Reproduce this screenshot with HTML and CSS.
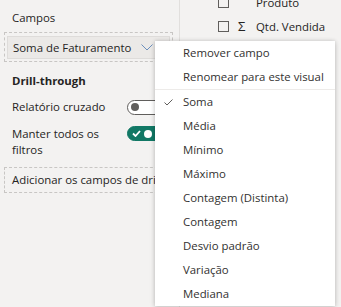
FILE: index.html
```html
<!DOCTYPE html>
<html lang="pt-BR">
<head>
    <meta charset="UTF-8">
    <meta name="viewport" content="width=device-width, initial-scale=1.0">
    <title>Campos</title>
    <link rel="stylesheet" href="styles.css">
</head>
<body>
    <div class="screen">
        <div class="panel">
            <div class="section-title">Campos</div>
            <div class="well">
                <div class="field">
                    <span>Soma de Faturamento</span>
                    <svg class="chev" width="12" height="7" viewBox="0 0 12 7"><polyline points="0.5,0.5 6,6 11.5,0.5" fill="none" stroke="#6b8fbd" stroke-width="1"/></svg>
                </div>
            </div>

            <div class="heading">Drill-through</div>

            <div class="row">
                <span class="row-label">Relatório cruzado</span>
                <span class="toggle"><span class="knob"></span></span>
            </div>
            <div class="row row-tall">
                <span class="row-label">Manter todos os<br>filtros</span>
                <span class="toggle on">
                    <svg width="9" height="7" viewBox="0 0 9 7"><polyline points="1,3.5 3.5,6 8,1" fill="none" stroke="#fff" stroke-width="1.8"/></svg>
                    <span class="knob"></span>
                </span>
            </div>

            <div class="drop">Adicionar os campos de drill-through aqui</div>
        </div>

        <div class="side">
            <div class="check-row first">
                <span class="box"></span>
                <span class="sigma"></span>
                <span>Produto</span>
            </div>
            <div class="check-row">
                <span class="box"></span>
                <span class="sigma">Σ</span>
                <span>Qtd. Vendida</span>
            </div>
        </div>

        <div class="menu">
            <div class="item">Remover campo</div>
            <div class="item">Renomear para este visual</div>
            <div class="sep"></div>
            <div class="item checked">
                <svg class="tick" width="9" height="7" viewBox="0 0 9 7"><polyline points="0.5,3.5 3,6 8.5,0.5" fill="none" stroke="#605e5c" stroke-width="1"/></svg>
                Soma
            </div>
            <div class="item">Média</div>
            <div class="item">Mínimo</div>
            <div class="item">Máximo</div>
            <div class="item">Contagem (Distinta)</div>
            <div class="item">Contagem</div>
            <div class="item">Desvio padrão</div>
            <div class="item">Variação</div>
            <div class="item">Mediana</div>
        </div>
    </div>
</body>
</html>
```

FILE: styles.css
```css
html, body {
    margin: 0;
    padding: 0;
}
body {
    font-family: "Open Sans", "Noto Sans", sans-serif;
    font-size: 11.4px;
    color: #252423;
    background-color: #f3f2f1;
}
.screen {
    position: relative;
    display: flex;
    width: 341px;
    height: 307px;
    overflow: hidden;
}
.panel {
    width: 180px;
    flex: none;
    box-sizing: border-box;
    padding: 10px 0 0 4px;
    border-right: 1px solid #e1dfdd;
}
.section-title {
    padding-left: 8px;
    line-height: 16px;
    height: 16px;
    margin-bottom: 6px;
}
.well {
    width: 169px;
    height: 30px;
    box-sizing: border-box;
    border: 1px dashed #c8c6c4;
    padding: 3px 0 0 2px;
}
.field {
    display: flex;
    align-items: center;
    width: 163px;
    height: 23px;
    box-sizing: border-box;
    padding-left: 5px;
    background-color: #ebe9e7;
    border: 1px solid #dedcda;
}
.field .chev {
    margin-left: auto;
    margin-right: 16px;
}
.heading {
    font-weight: bold;
    padding-left: 8px;
    line-height: 16px;
    margin-top: 11px;
}
.row {
    display: flex;
    align-items: center;
    padding-left: 8px;
    margin-top: 10px;
    height: 16px;
}
.row-label {
    width: 115px;
    line-height: 16px;
}
.row-tall {
    height: 32px;
    margin-top: 11px;
    align-items: flex-start;
}
.row-tall .toggle {
    margin-top: 0;
}
.toggle {
    display: flex;
    align-items: center;
    width: 38px;
    height: 15px;
    box-sizing: border-box;
    border: 1px solid #605e5c;
    border-radius: 8px;
    background-color: #fff;
    padding-left: 3px;
}
.toggle .knob {
    width: 8px;
    height: 8px;
    border-radius: 50%;
    background-color: #605e5c;
}
.toggle.on {
    background-color: #117865;
    border-color: #117865;
    padding-left: 4px;
}
.toggle.on .knob {
    background-color: #fff;
    margin-left: 3px;
}
.drop {
    width: 169px;
    height: 26px;
    box-sizing: border-box;
    border: 1px dashed #c8c6c4;
    margin-top: 9px;
    padding-left: 7px;
    line-height: 24px;
    white-space: nowrap;
    overflow: hidden;
}
.side {
    flex: 1;
    padding-left: 38px;
}
.check-row {
    display: flex;
    align-items: center;
    height: 24px;
}
.check-row.first {
    margin-top: -10px;
}
.box {
    width: 11px;
    height: 11px;
    box-sizing: border-box;
    border: 1px solid #605e5c;
    margin-right: 9px;
}
.sigma {
    width: 12px;
    margin-right: 6px;
    font-size: 13px;
}
.menu {
    position: absolute;
    left: 155px;
    top: 41px;
    width: 180px;
    height: 265px;
    background-color: #fff;
    box-shadow: 0 0 4px rgba(0, 0, 0, 0.18), 0 2px 6px rgba(0, 0, 0, 0.1);
}
.item {
    position: relative;
    height: 24px;
    line-height: 24px;
    padding-left: 28px;
    color: #323130;
    white-space: nowrap;
}
.tick {
    position: absolute;
    left: 9px;
    top: 9px;
}
.sep {
    height: 1px;
    background-color: #edebe9;
}
```
